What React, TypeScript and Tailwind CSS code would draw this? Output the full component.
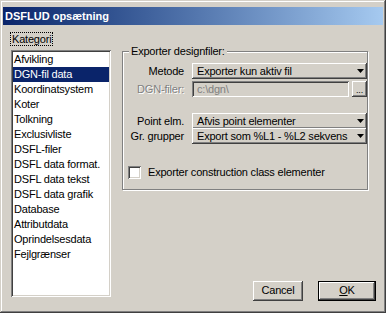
const categories = [
  "Afvikling",
  "DGN-fil data",
  "Koordinatsystem",
  "Koter",
  "Tolkning",
  "Exclusivliste",
  "DSFL-filer",
  "DSFL data format.",
  "DSFL data tekst",
  "DSFL data grafik",
  "Database",
  "Attributdata",
  "Oprindelsesdata",
  "Fejlgrænser",
]

const raised =
  "shadow-[inset_-1px_-1px_0_#404040,inset_1px_1px_0_#fff,inset_-2px_-2px_0_#808080]"
const sunken =
  "shadow-[inset_1px_1px_0_#808080,inset_-1px_-1px_0_#fff,inset_2px_2px_0_#404040,inset_-2px_-2px_0_#d4d0c8]"

function Combo({ text }: { text: string }) {
  return (
    <div className={`flex h-[16px] flex-1 items-center justify-between pl-[5px] pr-[3px] ${raised}`}>
      <span className="whitespace-nowrap leading-none">{text}</span>
      <svg width="7" height="4" viewBox="0 0 7 4">
        <path d="M0 0h7L3.5 4z" fill="#000" />
      </svg>
    </div>
  )
}

function Row({ label, disabled, children }: { label: string; disabled?: boolean; children: React.ReactNode }) {
  return (
    <div className="flex h-[16px] items-center">
      <span
        className={`w-[61px] shrink-0 whitespace-nowrap text-right ${
          disabled ? "text-[#808080] [text-shadow:1px_1px_0_#fff]" : ""
        }`}
      >
        {label}
      </span>
      <div className="ml-[8px] flex flex-1">{children}</div>
    </div>
  )
}

export default function App() {
  return (
    <div className="flex h-[313px] w-[386px] flex-col bg-[#d4d0c8] px-[3px] pt-[7px] font-['Liberation_Sans',Arial,sans-serif] text-[11px] tracking-[-0.2px] text-black shadow-[inset_-1px_-1px_0_#404040,inset_1px_1px_0_#d4d0c8,inset_-2px_-2px_0_#808080,inset_2px_2px_0_#fff]">
      {/* title bar */}
      <div className="flex h-[18px] shrink-0 items-center bg-linear-to-r from-[#0a246a] to-[#a6caf0] pl-[2px] font-bold tracking-normal text-white">
        DSFLUD opsætning
      </div>

      <div className="flex flex-1">
        {/* category list */}
        <div className="flex flex-col pl-[7px] pt-[7px]">
          <span className="h-[14px] self-start border border-dotted border-black px-[1px] leading-[12px]">
            Kategori
          </span>
          <div className={`ml-[1px] mt-[4px] h-[247px] w-[100px] bg-white p-[2px] ${sunken}`}>
            {categories.map((c) => (
              <div
                key={c}
                className={`h-[15px] whitespace-nowrap pl-[1px] leading-[15px] ${
                  c === "DGN-fil data" ? "bg-[#0a246a] text-white" : ""
                }`}
              >
                {c}
              </div>
            ))}
          </div>
        </div>

        {/* settings */}
        <div className="ml-[11px] flex flex-1 flex-col pr-[7px]">
          <div className="mt-[26px] flex w-[246px] flex-col border border-[#808080] pb-[8px] shadow-[inset_1px_1px_0_#fff,1px_1px_0_#fff]">
            <span className="-mt-[7px] ml-[6px] self-start bg-[#d4d0c8] px-[2px] leading-[13px]">
              Exporter designfiler:
            </span>

            <div className="mt-[5px] flex flex-col">
              <Row label="Metode">
                <Combo text="Exporter kun aktiv fil" />
              </Row>
              <div className="mt-[2px]">
                <Row label="DGN-filer:" disabled>
                  <div className={`flex h-[16px] flex-1 items-center pl-[5px] text-[#808080] ${sunken}`}>
                    c:\dgn\
                  </div>
                  <div
                    className={`ml-[3px] flex h-[16px] w-[15px] items-end justify-center pb-[2px] text-[9px] leading-none ${raised}`}
                  >
                    ...
                  </div>
                </Row>
              </div>
              <div className="mt-[16px]">
                <Row label="Point elm.">
                  <Combo text="Afvis point elementer" />
                </Row>
              </div>
              <div className="-mt-[1px]">
                <Row label="Gr. grupper">
                  <Combo text="Export som %L1 - %L2 sekvens" />
                </Row>
              </div>
            </div>

            <div className="ml-[5px] mt-[20px] flex items-center gap-[7px]">
              <div className={`h-[13px] w-[13px] bg-white ${sunken}`} />
              <span className="whitespace-nowrap">Exporter construction class elementer</span>
            </div>
          </div>

          <div className="mt-[91px] flex justify-end gap-[15px]">
            <div className={`flex h-[20px] w-[50px] items-center justify-center ${raised}`}>Cancel</div>
            <div className="h-[20px] w-[58px] border border-black">
              <div className={`flex h-full w-full items-center justify-center ${raised}`}>
                <span>
                  <span className="underline">O</span>K
                </span>
              </div>
            </div>
          </div>
        </div>
      </div>
    </div>
  )
}
